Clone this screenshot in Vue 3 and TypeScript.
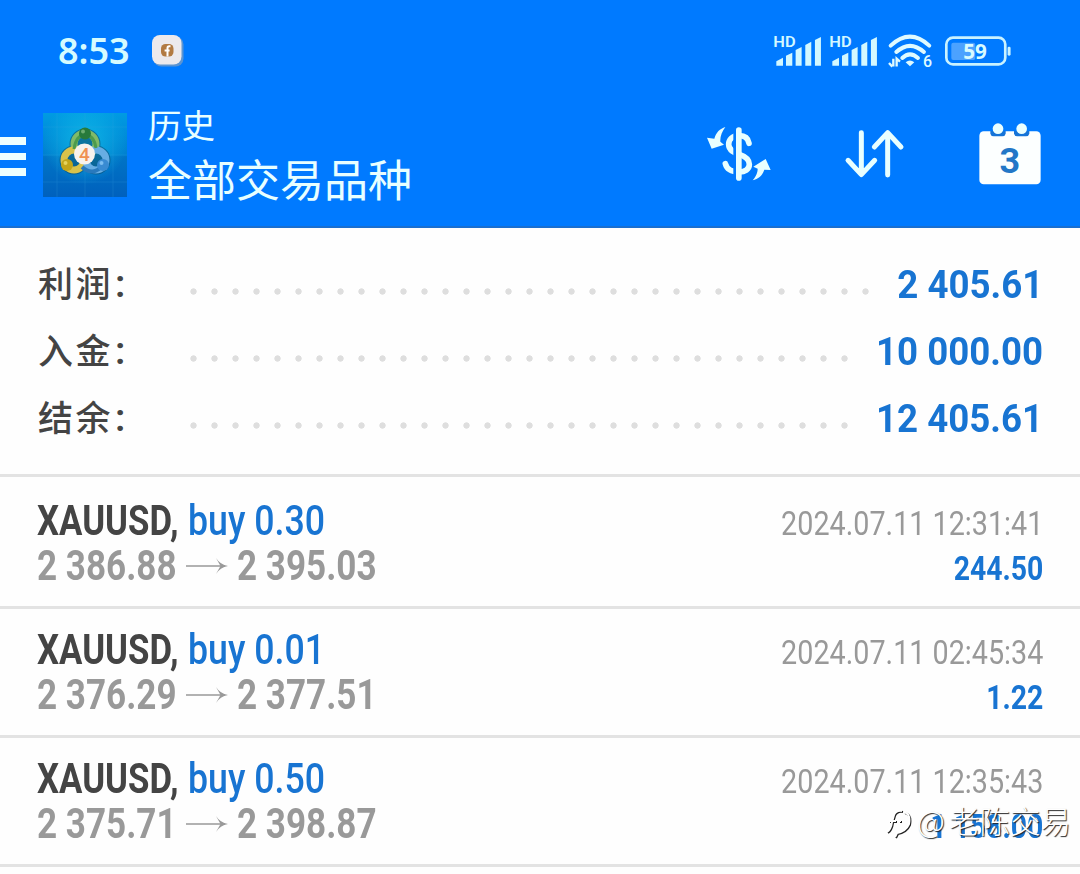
<template>
  <div class="screen">
    <header class="header">
      <div class="status-bar">
        <span class="clock">8:53</span>
        <svg class="app-badge" viewBox="0 0 32 32">
          <rect x="1.5" y="1.5" width="30" height="30" rx="8" fill="#5b94d2" />
          <rect x="0" y="0" width="29.5" height="29.5" rx="8" fill="#ece9ec" />
          <rect x="9" y="9" width="12.5" height="12.5" rx="4.5" fill="#b27a42" />
          <path d="M18.5 11.2h-1.2q-1.8 0-1.8 1.800V21.500M12.600 15.500h5" fill="none" stroke="#fff" stroke-width="2" />
        </svg>
        <div class="status-icons">
          <svg v-for="n in 2" :key="n" class="signal" viewBox="38 44 146 94">
            <text x="39" y="81" class="hd" textLength="67" lengthAdjust="spacingAndGlyphs">HD</text>
            <path d="M48 136v-13l20-11v24zM77 136v-30l19-9v39zM106 136V89l18-9v56zM135 136V74l18-10v72zM164 136V59l18-9v86z" />
          </svg>
          <svg class="wifi" viewBox="384 42 134 100">
            <g fill="none" stroke="#dffaff" stroke-width="12" stroke-linecap="round">
              <path d="M392 77Q450 23 508 77" />
              <path d="M409 96Q450 59 492 96" />
              <path d="M427 114Q450 92 474 114" />
            </g>
            <path d="M437 127q13-11 26 0l-13 12z" fill="#dffaff" />
            <path d="M400 116v24M387 129l10 11M410 140v-24l10 9" fill="none" stroke="#dffaff" stroke-width="7" />
            <text x="489" y="141" class="wifi-gen">6</text>
          </svg>
          <svg class="battery" viewBox="555 46 200 90">
            <rect x="574" y="66" width="72" height="52" rx="6" fill="#4ca2ff" />
            <rect x="559" y="51" width="177" height="80" rx="20" fill="none" stroke="#c9f2ff" stroke-width="8" />
            <rect x="743" y="78" width="9" height="27" rx="4" fill="#c9f2ff" />
            <text x="645" y="115" text-anchor="middle" class="battery-level">59</text>
          </svg>
        </div>
      </div>

      <div class="toolbar">
        <div class="menu">
          <span></span>
          <span></span>
          <span></span>
        </div>
        <svg class="logo" viewBox="0 0 84 84">
          <defs>
            <linearGradient id="tile" x1="0" y1="0" x2="0" y2="1">
              <stop offset="0" stop-color="#009be2" />
              <stop offset="0.5" stop-color="#0080cf" />
              <stop offset="0.52" stop-color="#0074c6" />
              <stop offset="1" stop-color="#0060bd" />
            </linearGradient>
            <radialGradient id="glow" cx="0.5" cy="0.35" r="0.5">
              <stop offset="0" stop-color="#12bfe9" stop-opacity="0.8" />
              <stop offset="1" stop-color="#12bfe9" stop-opacity="0" />
            </radialGradient>
          </defs>
          <rect width="84" height="84" fill="url(#tile)" />
          <rect width="84" height="84" fill="url(#glow)" />
          <path d="M0 14H84M0 42H84M0 69H84M14 0V84M42 0V84M70 0V84" stroke="#3aa4e0" stroke-width="0.7" opacity="0.3" />
          <g opacity="0.6" fill="#0b4d72">
            <circle cx="42" cy="31" r="15.5" />
            <circle cx="31" cy="47" r="14.5" />
            <circle cx="53" cy="47" r="14.5" />
          </g>
          <g fill="none" stroke-width="7">
            <circle cx="42" cy="31" r="11" stroke="#80ba68" />
            <circle cx="31" cy="47" r="10" stroke="#d8c24b" />
            <circle cx="53" cy="47" r="10" stroke="#67ade3" />
            <path d="M31 36Q33 22 42 22T53 35" stroke="#4d9b4d" stroke-width="3" />
            <path d="M39 54Q50 64 60 52" stroke="#2879bd" stroke-width="4" />
          </g>
          <circle cx="42" cy="20.5" r="6" fill="#277a3b" />
          <circle cx="24" cy="52" r="6" fill="#c2a519" />
          <circle cx="60" cy="52" r="6" fill="#398bd2" />
          <circle cx="40" cy="18.5" r="2" fill="#6bad70" />
          <circle cx="22.5" cy="50" r="2" fill="#e6d35c" />
          <circle cx="58.5" cy="50" r="2" fill="#7abdf0" />
          <circle cx="41.5" cy="41" r="10.5" fill="#f8f2ec" />
          <text x="41.5" y="48" text-anchor="middle" class="logo-digit">4</text>
        </svg>
        <div class="titles">
          <div class="title-small">历史</div>
          <div class="title-large">全部交易品种</div>
        </div>
        <div class="actions">
          <svg class="icon-currency" viewBox="50 65 195 165">
            <path
              d="M179 117C176 100 163 94 150 94C128 94 118 107 118 120C118 140 138 146 150 150C171 157 180 166 180 180C180 196 166 203 150 203C126 203 112 194 108 178"
              fill="none"
              stroke="#e8ffff"
              stroke-width="17"
              stroke-linecap="round"
            />
            <path d="M136 82V216" stroke="#007aff" stroke-width="8" />
            <path d="M148.500 77V221" stroke="#e8ffff" stroke-width="17" stroke-linecap="round" />
            <path
              d="M108 68C92 73 80 84 75 103L53 100L67 133L104 121L93 112C92 96 98 82 108 68ZM190 228C202 214 205 202 205 193L192 187L229 164L244 197L225 196C219 214 208 224 190 228Z"
              fill="#e8ffff"
            />
          </svg>
          <svg class="icon-sort" viewBox="468 74 176 148">
            <path
              d="M517 85V210M477 168L517 211L557 168M596 212V86M556 128L596 85L636 128"
              fill="none"
              stroke="#e8ffff"
              stroke-width="15"
              stroke-linecap="round"
              stroke-linejoin="round"
            />
          </svg>
          <svg class="icon-calendar" viewBox="868 50 186 190">
            <rect x="869" y="78" width="184" height="159" rx="13" fill="#fcffff" />
            <path d="M902 77H948V85Q946 93 938 93H912Q904 93 902 85ZM973 77H1019V85Q1017 93 1009 93H983Q975 93 973 85Z" fill="#1574d8" />
            <circle cx="925" cy="70" r="16" fill="#eaffff" />
            <circle cx="996" cy="70" r="16" fill="#eaffff" />
            <text x="960.500" y="203" text-anchor="middle" class="calendar-day">3</text>
          </svg>
        </div>
      </div>
    </header>

    <section class="summary">
      <div v-for="item in summary" :key="item.label" class="summary-row">
        <span class="summary-label">{{ item.label }}</span>
        <span class="colon">:</span>
        <span class="leader" :style="{ width: item.dots * 21 + 'px' }"></span>
        <span class="summary-value">{{ item.value }}</span>
      </div>
    </section>

    <section class="deals">
      <article v-for="deal in deals" :key="deal.time" class="deal">
        <div class="line">
          <span class="symbol">{{ deal.symbol }},</span>
          <span class="volume">{{ deal.side }} {{ deal.volume }}</span>
          <span class="time">{{ deal.time }}</span>
        </div>
        <div class="line">
          <span class="price">{{ deal.open }}</span>
          <svg class="arrow" viewBox="0 0 42 16">
            <path d="M0 8H39" stroke="#999" stroke-width="1.5" />
            <path d="M30 0Q34 6.500 42 8Q34 9.500 30 16L34.500 8Z" fill="#999" />
          </svg>
          <span class="price">{{ deal.close }}</span>
          <span class="profit">{{ deal.profit }}</span>
        </div>
      </article>
    </section>

    <div class="watermark">
      <svg viewBox="0 0 27 36">
        <path d="M2 27Q6 24 7 17L9 10Q11 5 17 6M4 16H11M14 16H16M19 7Q26 9 24 19Q21 26 12 28L10 32" />
      </svg>
      <span class="at">@</span>
      <span>老陈交易</span>
    </div>
  </div>
</template>

<script setup lang="ts">
interface SummaryItem {
  label: string
  value: string
  dots: number
}

interface Deal {
  symbol: string
  side: 'buy' | 'sell'
  volume: string
  open: string
  close: string
  time: string
  profit: string
}

const summary: SummaryItem[] = [
  { label: '利润', value: '2 405.61', dots: 33 },
  { label: '入金', value: '10 000.00', dots: 32 },
  { label: '结余', value: '12 405.61', dots: 32 }
]

const deals: Deal[] = [
  { symbol: 'XAUUSD', side: 'buy', volume: '0.30', open: '2 386.88', close: '2 395.03', time: '2024.07.11 12:31:41', profit: '244.50' },
  { symbol: 'XAUUSD', side: 'buy', volume: '0.01', open: '2 376.29', close: '2 377.51', time: '2024.07.11 02:45:34', profit: '1.22' },
  { symbol: 'XAUUSD', side: 'buy', volume: '0.50', open: '2 375.71', close: '2 398.87', time: '2024.07.11 12:35:43', profit: '1 158.00' }
]
</script>

<style>
body {
  margin: 0;
  background: #fff;
}
</style>

<style scoped>
.screen {
  position: relative;
  width: 1080px;
  height: 874px;
  overflow: hidden;
  background: #fefefe;
  font-family: Roboto, "Noto Sans CJK SC", sans-serif;
}

.header {
  box-sizing: border-box;
  height: 228px;
  background: #007aff;
  border-bottom: 2px solid #1a6fd0;
}

.header svg {
  flex: none;
  overflow: visible;
}

.status-bar {
  display: flex;
  align-items: center;
  height: 102px;
  padding: 0 68px 0 58px;
}

.clock {
  width: 94px;
  font-family: "Noto Sans", sans-serif;
  font-size: 36px;
  font-weight: 600;
  line-height: 102px;
  color: #d5fbff;
}

.app-badge {
  width: 32px;
  height: 32px;
}

.status-icons {
  display: flex;
  align-items: center;
  margin-left: auto;
}

.signal {
  width: 48.600px;
  height: 31.300px;
  margin-right: 7.400px;
  fill: #d3f8ff;
}

.hd {
  font-family: Roboto, sans-serif;
  font-size: 46px;
  font-weight: 600;
}

.wifi {
  width: 44.600px;
  height: 33.300px;
  margin-left: 3px;
  margin-right: 12.400px;
}

.wifi-gen {
  font-family: Roboto, sans-serif;
  font-size: 48px;
  font-weight: 500;
  fill: #dffaff;
}

.battery {
  width: 66.600px;
  height: 30px;
}

.battery-level {
  font-family: "Noto Sans", sans-serif;
  font-size: 62px;
  font-weight: 700;
  fill: #d9fbff;
}

.toolbar {
  display: flex;
  align-items: flex-start;
  height: 124px;
}

.menu {
  display: flex;
  flex-direction: column;
  gap: 8px;
  width: 42.500px;
  padding-top: 35px;
}

.menu span {
  width: 26px;
  height: 7.500px;
  background: #ecffff;
}

.logo {
  width: 84px;
  height: 84px;
  margin-top: 11px;
}

.logo-digit {
  font-family: Roboto, sans-serif;
  font-size: 19px;
  font-weight: 500;
  fill: #ef9152;
}

.titles {
  margin-top: -1px;
  margin-left: 21.500px;
  color: #e8ffff;
  font-family: "Noto Sans CJK SC", sans-serif;
}

.title-small {
  font-size: 33.500px;
  line-height: 46px;
}

.title-large {
  font-size: 44px;
  line-height: 62px;
}

.actions {
  display: flex;
  align-items: center;
  margin-left: auto;
  padding: 20px 39px 0 0;
}

.icon-currency {
  width: 65px;
  height: 55px;
  margin-right: 74px;
}

.icon-sort {
  width: 58.700px;
  height: 49.300px;
  margin-right: 75px;
}

.icon-calendar {
  width: 62px;
  height: 63.300px;
}

.calendar-day {
  font-family: Roboto, sans-serif;
  font-size: 108px;
  font-weight: 700;
  fill: #2377c7;
}

.summary {
  height: 201px;
  padding: 22px 37px 23px 38px;
  border-bottom: 3px solid #e3e3e3;
}

.summary-row {
  display: flex;
  height: 67px;
  line-height: 67px;
}

.summary-label {
  width: 77px;
  font-family: "Noto Sans CJK SC", sans-serif;
  font-size: 35px;
  font-weight: 500;
  line-height: 64px;
  letter-spacing: 2.500px;
  color: #444;
}

.colon {
  width: 68px;
  font-size: 38px;
  font-weight: 600;
  line-height: 68px;
  color: #444;
}

.leader {
  height: 67px;
  background: radial-gradient(circle at 10.500px 41.500px, #dedede 2.800px, transparent 3.500px) repeat-x;
  background-size: 21px 67px;
}

.summary-value {
  margin-left: auto;
  font-size: 38px;
  font-weight: 700;
  line-height: 70px;
  color: #1874d2;
  transform: scaleX(0.965);
  transform-origin: right;
}

.deals {
  padding-top: 3px;
}

.deal {
  padding: 18px 37px 18px 37px;
  border-bottom: 3px solid #e3e3e3;
}

.line {
  display: flex;
  align-items: baseline;
  height: 45px;
  line-height: 45px;
  font-size: 42px;
  white-space: nowrap;
}

/* condensed text keeps a fixed box and is squeezed horizontally */
.symbol,
.volume,
.price {
  transform: scaleX(0.835);
  transform-origin: left;
}

.symbol {
  width: 151px;
  font-weight: 700;
  color: #444;
  transform: scaleX(0.828);
}

.volume {
  font-weight: 500;
  color: #1874d2;
  transform: scaleX(0.85);
}

.price {
  width: 149px;
  font-weight: 700;
  color: #999;
}

.arrow {
  flex: none;
  align-self: center;
  width: 42px;
  height: 16px;
  margin-right: 9px;
}

.time,
.profit {
  margin-left: auto;
  font-size: 34px;
  transform: scaleX(0.845);
  transform-origin: right;
}

.time {
  color: #999;
}

.profit {
  font-weight: 700;
  color: #1874d2;
  transform: scaleX(0.835);
}

.watermark {
  position: absolute;
  top: 798px;
  left: 885px;
  display: flex;
  align-items: center;
  height: 44px;
  font-family: "Noto Sans CJK SC", sans-serif;
  font-size: 30.500px;
  font-weight: 300;
  color: #fff;
  text-shadow: 1px 1px 1px #222;
  white-space: nowrap;
}

.watermark svg {
  width: 27px;
  height: 36px;
  margin-top: 5px;
  margin-right: 5px;
  fill: none;
  stroke: #fff;
  stroke-width: 2;
  filter: drop-shadow(1px 1px 0.500px #222);
}

.at {
  width: 32px;
}
</style>
